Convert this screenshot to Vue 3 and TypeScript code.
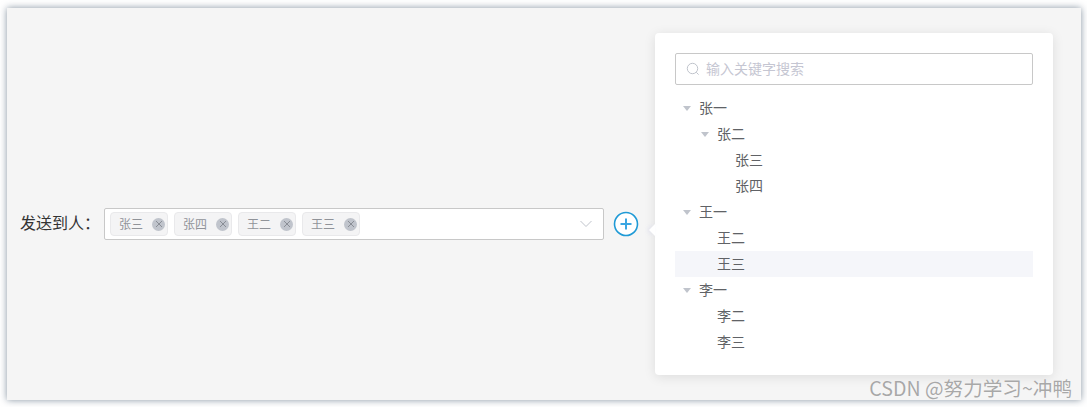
<template>
  <div class="page">
    <div class="frame">
      <div class="form-row">
        <span class="form-label">发送到人：</span>
        <div class="select">
          <span v-for="tag in tags" :key="tag" class="tag">
            <span class="tag-text">{{ tag }}</span>
            <span class="tag-close">
              <svg width="8" height="8" viewBox="0 0 8 8">
                <path d="M1 1 L7 7 M7 1 L1 7" stroke="#8a8e96" stroke-width="1" fill="none" />
              </svg>
            </span>
          </span>
          <svg class="select-arrow" width="14" height="8" viewBox="0 0 14 8">
            <path d="M1.5 1 L7 6.5 L12.5 1" stroke="#c0c4cc" stroke-width="1" fill="none" />
          </svg>
        </div>
        <svg class="add-btn" width="26" height="26" viewBox="0 0 26 26">
          <circle cx="13" cy="13" r="11.5" stroke="#1f9ad6" stroke-width="1.6" fill="#fff" />
          <path d="M13 7.5 V18.5 M7.5 13 H18.5" stroke="#3aa6e2" stroke-width="2" fill="none" />
        </svg>
      </div>

      <div class="popover">
        <span class="popover-arrow"></span>
        <div class="search">
          <svg width="14" height="14" viewBox="0 0 14 14">
            <circle cx="6.5" cy="6.5" r="5.2" stroke="#c0c4cc" stroke-width="1" fill="none" />
            <path d="M10.3 10.3 L12.6 12.6" stroke="#c0c4cc" stroke-width="1" fill="none" />
          </svg>
          <span class="search-placeholder">输入关键字搜索</span>
        </div>
        <div class="tree">
          <div
            v-for="node in nodes"
            :key="node.label"
            class="tree-node"
            :class="{ active: node.active }"
            :style="{ paddingLeft: node.level * 18 + 'px' }"
          >
            <span class="caret" :class="{ hidden: !node.open }"></span>
            <span class="tree-label">{{ node.label }}</span>
          </div>
        </div>
      </div>

      <span class="watermark">CSDN @努力学习~冲鸭</span>
    </div>
  </div>
</template>

<script setup lang="ts">
interface TreeNode {
  label: string
  level: number
  open?: boolean
  active?: boolean
}

const tags = ['张三', '张四', '王二', '王三']

const nodes: TreeNode[] = [
  { label: '张一', level: 0, open: true },
  { label: '张二', level: 1, open: true },
  { label: '张三', level: 2 },
  { label: '张四', level: 2 },
  { label: '王一', level: 0, open: true },
  { label: '王二', level: 1 },
  { label: '王三', level: 1, active: true },
  { label: '李一', level: 0, open: true },
  { label: '李二', level: 1 },
  { label: '李三', level: 1 }
]
</script>

<style>
html,
body {
  margin: 0;
  background: #fff;
}
</style>

<style scoped>
.page {
  width: 1087px;
  height: 407px;
  box-sizing: border-box;
  padding: 8px 6px 7px 7px;
  overflow: hidden;
  font-family: "Liberation Sans", "Noto Sans CJK SC", sans-serif;
}

.frame {
  position: relative;
  height: 100%;
  box-sizing: border-box;
  padding: 25px 28px 0 13px;
  display: flex;
  justify-content: space-between;
  align-items: flex-start;
  background: #f5f5f5;
  box-shadow: 0 0 7px rgba(70, 90, 110, 0.65);
}

.form-row {
  display: flex;
  align-items: center;
  margin-top: 175px;
}

.form-label {
  width: 84px;
  height: 32px;
  font-size: 16px;
  line-height: 32px;
  white-space: nowrap;
  color: #333;
}

.select {
  position: relative;
  width: 500px;
  height: 32px;
  box-sizing: border-box;
  padding-left: 5px;
  display: flex;
  align-items: center;
  gap: 6px;
  background: #fff;
  border: 1px solid #c8c8c8;
  border-radius: 2px;
}

.tag {
  width: 58px;
  height: 24px;
  box-sizing: border-box;
  padding-left: 8px;
  display: flex;
  align-items: center;
  background: #f4f4f5;
  border: 1px solid #e9e9eb;
  border-radius: 4px;
}

.tag-text {
  width: 33px;
  padding-bottom: 2px;
  font-size: 12px;
  color: #909399;
}

.tag-close {
  width: 13px;
  height: 13px;
  display: flex;
  align-items: center;
  justify-content: center;
  background: #c0c4cc;
  border-radius: 50%;
}

.select-arrow {
  position: absolute;
  right: 10px;
  top: 11px;
}

.add-btn {
  margin-left: 9px;
}

.popover {
  position: relative;
  width: 398px;
  height: 342px;
  box-sizing: border-box;
  padding: 20px;
  background: #fff;
  border-radius: 4px;
  box-shadow: 0 2px 12px rgba(0, 0, 0, 0.1);
}

.popover-arrow {
  position: absolute;
  left: -6px;
  top: 191px;
  width: 0;
  height: 0;
  border-top: 6px solid transparent;
  border-bottom: 6px solid transparent;
  border-right: 6px solid #fff;
  filter: drop-shadow(-2px 0 2px rgba(120, 130, 220, 0.12));
}

.search {
  height: 32px;
  box-sizing: border-box;
  padding-left: 10px;
  display: flex;
  align-items: center;
  gap: 6px;
  border: 1px solid #c8c8c8;
  border-radius: 2px;
}

.search-placeholder {
  padding-bottom: 2px;
  font-size: 14px;
  color: #c5c6d2;
}

.tree {
  margin-top: 10px;
}

.tree-node {
  height: 26px;
  display: flex;
  align-items: center;
  font-size: 14px;
  color: #606266;
}

.tree-node.active {
  background: #f5f6fa;
}

.tree-label {
  margin-left: 1px;
  padding-bottom: 2px;
}

.caret {
  width: 0;
  height: 0;
  margin: 1px 7px 0 8px;
  border-left: 4px solid transparent;
  border-right: 4px solid transparent;
  border-top: 5px solid #c0c4cc;
}

.caret.hidden {
  visibility: hidden;
}

.watermark {
  position: absolute;
  right: 9px;
  bottom: 2px;
  font-family: "Noto Sans CJK SC", sans-serif;
  font-size: 19.6px;
  line-height: 20px;
  color: #a8a8a8;
  text-shadow: 0 0 1px #fff;
}
</style>
